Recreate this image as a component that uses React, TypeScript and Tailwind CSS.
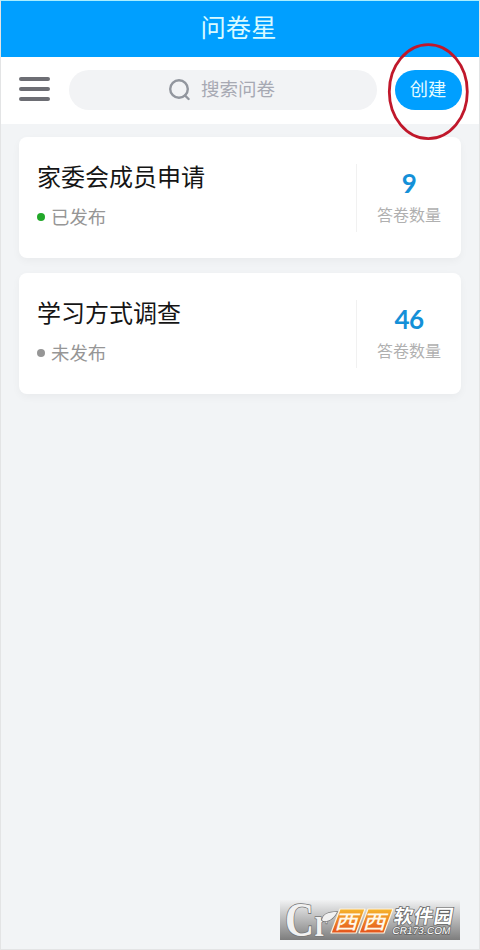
type Survey = {
	title: string;
	status: string;
	published: boolean;
	count: number;
};

const surveys: Survey[] = [
	{ title: "家委会成员申请", status: "已发布", published: true, count: 9 },
	{ title: "学习方式调查", status: "未发布", published: false, count: 46 },
];

function SearchIcon() {
	return (
		<svg className="h-6 w-6" viewBox="0 0 24 24" fill="none" stroke="#92969e" strokeWidth="2.4" strokeLinecap="round">
			<circle cx="11" cy="11" r="8.8" />
			<path d="M17 17.5 20.6 21" />
		</svg>
	);
}

function SurveyCard({ survey }: { survey: Survey }) {
	return (
		<div className="flex h-[121px] items-center rounded-lg bg-white pl-[18px] shadow-[0_3px_8px_rgba(0,0,0,0.04)]">
			<div className="flex-1 pb-[7px]">
				<h2 className="text-[24px] leading-[32px] text-[#151515]">{survey.title}</h2>
				<div className="mt-[11px] flex items-center gap-[6px]">
					<span className={`mt-[2px] h-[8px] w-[8px] rounded-full ${survey.published ? "bg-[#22a82a]" : "bg-[#969696]"}`}></span>
					<span className="text-[18.4px] leading-[26px] text-[#969696]">{survey.status}</span>
				</div>
			</div>
			<div className="flex h-[68px] w-[105px] flex-col items-center border-l border-[#f1f1f1]">
				<span className="font-['Lato','Noto_Sans_CJK_SC',sans-serif] text-[26px] leading-[38px] font-bold tracking-[-0.5px] text-[#1490d8]">{survey.count}</span>
				<span className="text-[16px] leading-[24px] text-[#b0b0b0]">答卷数量</span>
			</div>
		</div>
	);
}

function SiteBadge() {
	return (
		<svg className="absolute top-[899px] left-[279px] h-10 w-[180px] overflow-visible" viewBox="0 0 180 40">
			<defs>
				<linearGradient id="plate" x1="0" y1="0" x2="0" y2="1">
					<stop offset="0" stopColor="#f1f2f3" />
					<stop offset="1" stopColor="#7d7d7d" />
				</linearGradient>
				<linearGradient id="orange" x1="0" y1="0" x2="0" y2="1">
					<stop offset="0" stopColor="#f6b52c" />
					<stop offset="1" stopColor="#e4521c" />
				</linearGradient>
			</defs>
			<rect width="180" height="40" fill="url(#plate)" />
			<g fill="#f1f1f1" stroke="#777" strokeWidth="1.6" paintOrder="stroke" fontWeight="700" fontFamily="'Liberation Serif', serif">
				<text x="5" y="36" fontSize="48" textLength="29" lengthAdjust="spacingAndGlyphs">C</text>
				<text x="34.5" y="36" fontSize="40" textLength="13" lengthAdjust="spacingAndGlyphs">r</text>
				<path d="M42 20c1-6 6-8 15-8-3 6-8 10-14 9z" />
			</g>
			<g fill="url(#orange)" stroke="#fff4dd" strokeWidth="1.2" strokeLinejoin="round">
				<path d="M60 9h25l-9 24H51z" />
				<path d="M88 9h25l-9 24H79z" />
			</g>
			<g fill="#fff8e8" fontSize="21" fontWeight="500" textAnchor="middle" fontFamily="'Noto Sans CJK SC', sans-serif">
				<text transform="translate(68 21) skewX(-16) scale(1.1 .95)" y="8">西</text>
				<text transform="translate(96 21) skewX(-16) scale(1.1 .95)" y="8">西</text>
			</g>
			<g transform="skewX(-10)" fill="#fff" stroke="#666" strokeWidth="1.5" paintOrder="stroke">
				<text x="117" y="23" fontSize="19" fontWeight="700" fontFamily="'Noto Sans CJK SC', sans-serif" textLength="59">软件园</text>
				<text x="118" y="34.5" fontSize="10" fontFamily="'Liberation Sans', sans-serif" textLength="58">CR173.COM</text>
			</g>
		</svg>
	);
}

export default function App() {
	return (
		<div className="relative h-[950px] w-[480px] overflow-hidden border border-t-[#a8eeff] border-x-[#e3e4e5] border-b-[#e3e4e5] bg-[#f2f4f6] font-['Noto_Sans_CJK_SC',sans-serif]">
			<header className="flex h-14 items-center justify-center bg-[#009fff] pr-[3px] pb-[7px]">
				<h1 className="text-[25.3px] leading-[36px] text-[#d9faff]">问卷星</h1>
			</header>

			<div className="flex h-[67px] items-center bg-white pb-px pl-[18px]">
				<div className="mb-[2px] flex w-[31px] flex-col gap-[6px]">
					<span className="h-1 rounded-full bg-[#6d6e74]"></span>
					<span className="h-1 rounded-full bg-[#6d6e74]"></span>
					<span className="h-1 rounded-full bg-[#6d6e74]"></span>
				</div>
				<div className="ml-[19px] flex h-10 w-[308px] items-center justify-center gap-[9px] rounded-full bg-[#f2f3f5] pr-[3px]">
					<SearchIcon />
					<span className="pb-[3px] text-[18.5px] text-[#a7a9b3]">搜索问卷</span>
				</div>
				<button className="ml-[17.5px] h-10 w-[67px] rounded-full bg-[#009fff] pb-[3px] text-[18.3px] text-[#e4fbff]">创建</button>
			</div>

			<main className="flex flex-col gap-[15px] px-[18px] pt-[13px]">
				{surveys.map(survey => (
					<SurveyCard key={survey.title} survey={survey} />
				))}
			</main>

			{/* Red ring around the create button */}
			<svg className="absolute top-[41px] left-[385px] h-[100px] w-[84px]" viewBox="0 0 84 100" fill="none">
				<ellipse cx="42.3" cy="49.7" rx="39" ry="47" stroke="#c0182b" strokeWidth="2.8" />
			</svg>

			<SiteBadge />
		</div>
	);
}
